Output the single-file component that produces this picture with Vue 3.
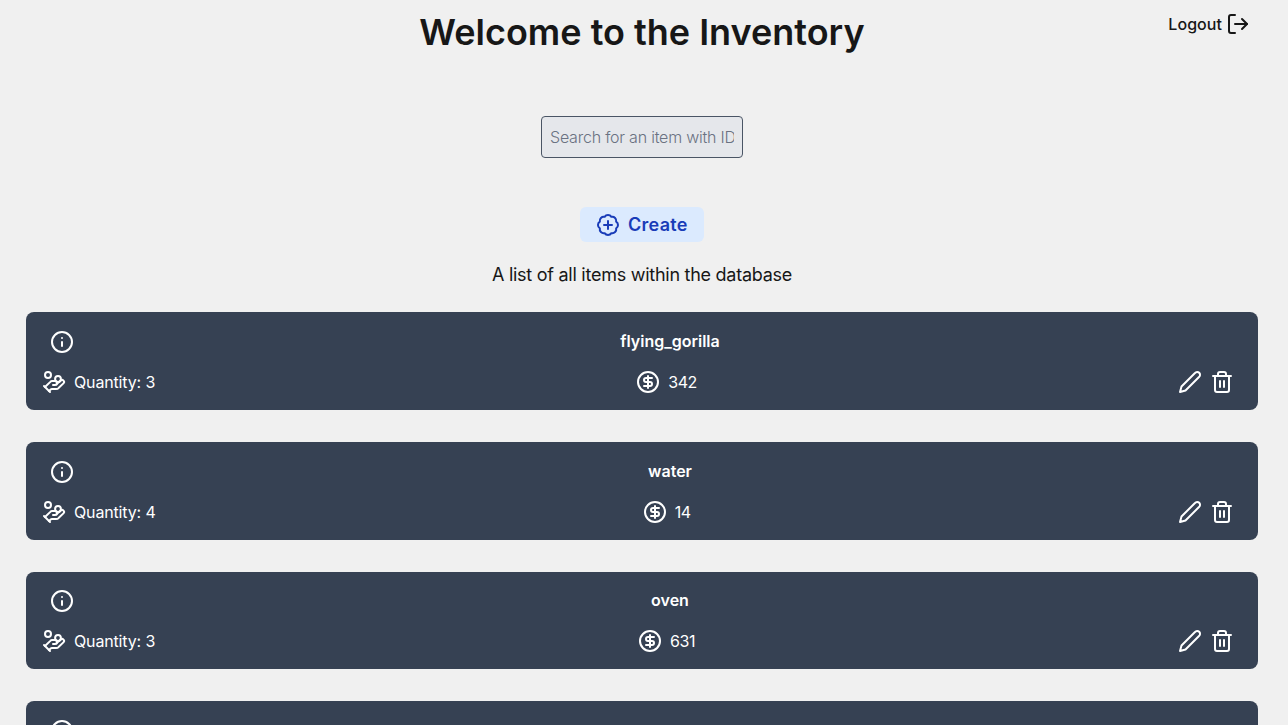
<script setup>
const items = [
  { id: 1, name: 'flying_gorilla', qty: 3, price: 342 },
  { id: 2, name: 'water', qty: 4, price: 14 },
  { id: 3, name: 'oven', qty: 3, price: 631 },
  { id: 4 }
]
</script>

<template>
  <main class="page">
    <header class="top">
      <h1 class="title">Welcome to the Inventory</h1>
      <a class="logout">
        <span>Logout</span>
        <svg class="icon" viewBox="0 0 24 24"><path d="M9 21H5a2 2 0 0 1-2-2V5a2 2 0 0 1 2-2h4" /><path d="m16 17 5-5-5-5" /><path d="M21 12H9" /></svg>
      </a>
    </header>

    <div class="search-wrap">
      <input class="search" type="text" placeholder="Search for an item with ID" />
    </div>

    <div class="create-wrap">
      <button class="create" type="button">
        <svg class="icon" viewBox="0 0 24 24"><path d="M3.85 8.62a4 4 0 0 1 4.78-4.77 4 4 0 0 1 6.74 0 4 4 0 0 1 4.78 4.78 4 4 0 0 1 0 6.74 4 4 0 0 1-4.77 4.78 4 4 0 0 1-6.75 0 4 4 0 0 1-4.78-4.77 4 4 0 0 1 0-6.76Z" /><path d="M12 8v8M8 12h8" /></svg>
        <span>Create</span>
      </button>
    </div>

    <p class="caption">A list of all items within the database</p>

    <section class="list">
      <article v-for="item in items" :key="item.id" class="card">
        <div class="row-head">
          <span class="info">
            <svg class="icon" viewBox="0 0 24 24"><circle cx="12" cy="12" r="10" /><path d="M12 16v-4" /><path d="M12 8h.01" /></svg>
          </span>
          <span v-if="item.name" class="name">{{ item.name }}</span>
        </div>
        <div v-if="item.name" class="row-body">
          <span class="meta">
            <svg class="icon" viewBox="0 0 24 24"><path d="M11 15h2a2 2 0 1 0 0-4h-3c-.6 0-1.100.2-1.400.6L3 17" /><path d="m7 21 1.600-1.400c.3-.4.8-.6 1.400-.6h4c1.100 0 2.100-.4 2.800-1.200l4.600-4.400a2 2 0 0 0-2.750-2.910l-4.200 3.900" /><path d="m2 16 6 6" /><circle cx="16" cy="9" r="2.900" /><circle cx="6" cy="5" r="3" /></svg>
            <span>Quantity: {{ item.qty }}</span>
          </span>
          <span class="meta price">
            <svg class="icon" viewBox="0 0 24 24"><circle cx="12" cy="12" r="10" /><path d="M16 8h-6a2 2 0 1 0 0 4h4a2 2 0 1 1 0 4H8" /><path d="M12 18V6" /></svg>
            <span>{{ item.price }}</span>
          </span>
          <span class="actions">
            <svg class="icon" viewBox="0 0 24 24"><path d="M17 3a2.850 2.830 0 1 1 4 4L7.500 20.500 2 22l1.500-5.500Z" /></svg>
            <svg class="icon" viewBox="0 0 24 24"><path d="M3 6h18" /><path d="M19 6v14c0 1-1 2-2 2H7c-1 0-2-1-2-2V6" /><path d="M8 6V4c0-1 1-2 2-2h4c1 0 2 1 2 2v2" /><path d="M10 11v6M14 11v6" /></svg>
          </span>
        </div>
      </article>
    </section>
  </main>
</template>

<style>
html, body { margin: 0; background: #f0f0f0; }
</style>

<style scoped>
.page {
  font-family: Inter, "Liberation Sans", sans-serif;
  color: #171717;
  padding: 0 30px 0 26px;
  height: 725px;
  box-sizing: border-box;
  overflow: hidden;
}
.icon { width: 24px; height: 24px; fill: none; stroke: currentColor; stroke-width: 2; stroke-linecap: round; stroke-linejoin: round; flex: none; }
.top { position: relative; height: 64px; display: flex; justify-content: center; align-items: center; }
.title { margin: 0; font-size: 36px; line-height: 64px; font-weight: 600; letter-spacing: 0; }
.logout { position: absolute; right: 8px; top: 12px; display: flex; align-items: center; gap: 4px; font-size: 16px; font-weight: 500; letter-spacing: .05px; }
.search-wrap { display: flex; justify-content: center; margin-top: 52px; }
.search {
  width: 202px; height: 42px; box-sizing: border-box; padding: 0 8px; border: 1px solid #4a5565; border-radius: 4px;
  background: #e5e7eb; font: 300 16px Inter, sans-serif; letter-spacing: -.22px; color: #171717; outline: none;
}
.search::placeholder { color: #6a7282; }
.create-wrap { display: flex; justify-content: center; margin-top: 49px; }
.create {
  display: flex; align-items: center; gap: 8px; width: 124px; height: 35px; padding: 0 16px; box-sizing: border-box;
  border: 0; border-radius: 6px; background: #dbeafe; color: #193cb8; font: 600 18px Inter, sans-serif; letter-spacing: .3px;
}
.caption { margin: 19px 0 0; height: 27px; line-height: 27px; text-align: center; font-size: 18px; letter-spacing: -.26px; }
.list { margin-top: 24.4px; width: 1232px; display: flex; flex-direction: column; gap: 32px; }
.card { height: 97.6px; box-sizing: border-box; padding-top: 9.6px; background: #364153; border-radius: 8px; color: #fff; flex: none; }
.row-head { display: flex; align-items: center; height: 40px; padding-left: 16px; }
.info { display: flex; padding: 8px; }
.name { flex: 1; text-align: center; font-size: 16px; font-weight: 600; padding-bottom: 2px; }
.row-body { display: flex; align-items: center; justify-content: space-between; height: 40px; padding: 0 24px 0 16px; font-size: 16px; letter-spacing: -.15px; }
.meta { display: flex; align-items: center; gap: 8px; }
.price { letter-spacing: -.4px; }
.actions { display: flex; gap: 8px; }
</style>
